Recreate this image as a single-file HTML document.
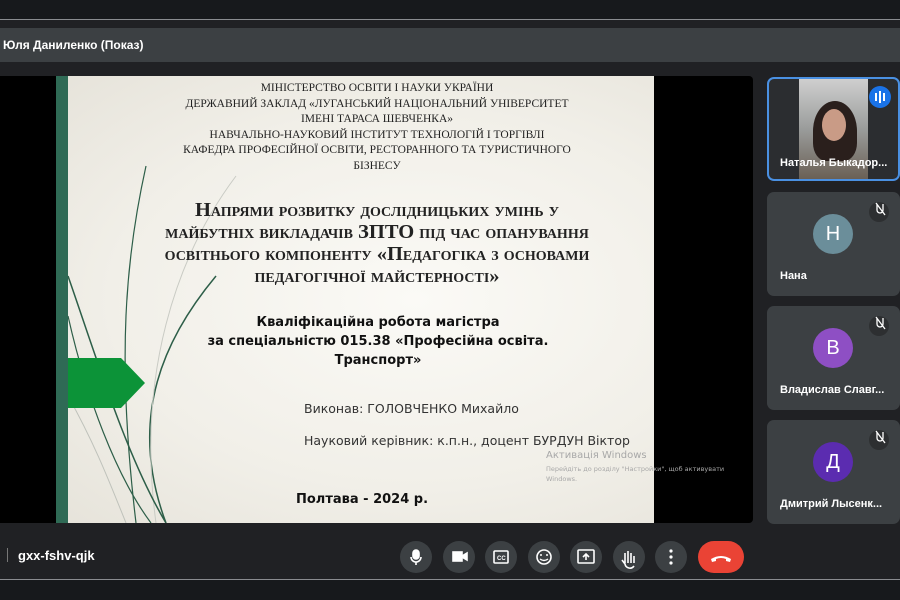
<!DOCTYPE html>
<html><head><meta charset="utf-8"><style>
*{margin:0;padding:0;box-sizing:border-box}
body{width:900px;height:600px;background:#202124;position:relative;overflow:hidden;font-family:"Liberation Sans",sans-serif}
.abs{position:absolute}
.top{left:0;top:0;width:900px;height:20px;background:#17191c;border-bottom:1px solid #8a8c90}
.hdr{left:0;top:28px;width:900px;height:34px;background:#3c4043;color:#fff;font-size:12px;font-weight:bold;line-height:34px;padding-left:3px}
.video{left:0;top:76px;width:753px;height:447px;background:#000;overflow:hidden;border-radius:0 4px 4px 0}
.slide{left:56px;top:0;width:598px;height:447px;background:radial-gradient(ellipse at 60% 50%,#fbfaf6 0%,#f1efe8 60%,#e6e3da 100%)}
.stripe{left:0;top:0;width:12px;height:447px;background:#2f6a55}
.serif{font-family:"Liberation Serif",serif;color:#222;text-align:center;white-space:nowrap}
.t1{left:22px;width:598px;top:5px;font-size:11.5px;line-height:15.6px}
.t2{left:22px;width:598px;top:123px;font-size:20.5px;line-height:22px;font-weight:bold;font-variant:small-caps}
.sans{font-family:"DejaVu Sans","Liberation Sans",sans-serif;color:#111;white-space:nowrap}
.k{left:122px;width:400px;top:237px;font-size:13px;line-height:19px;font-weight:bold;text-align:center}
.tile{left:767px;width:133px;height:104px;background:#3c4043;border-radius:7px}
.av{width:40px;height:40px;border-radius:50%;color:#fff;font-size:20px;text-align:center;line-height:40px;left:46px;top:22px}
.nm{left:13px;top:78px;color:#fff;font-size:11px;font-weight:bold;white-space:nowrap}
.mic{left:102px;top:10px;width:20px;height:20px;border-radius:50%;background:#2d2f31}
.btn{top:541px;width:32px;height:32px;border-radius:50%;background:#3c4043}
</style></head><body>
<div class="abs top"></div>
<div class="abs hdr">Юля Даниленко (Показ)</div>
<div class="abs video">
 <div class="abs slide">
  <svg class="abs" style="left:0;top:0" width="200" height="447" viewBox="0 0 200 447">
   <path d="M90 90 C70 180 60 280 80 447" stroke="#2d5e48" stroke-width="1.2" fill="none"/>
   <path d="M160 200 C110 260 70 340 110 447" stroke="#2d5e48" stroke-width="1.5" fill="none"/>
   <path d="M180 100 C120 180 80 300 100 447" stroke="#c9cbc4" stroke-width="1" fill="none"/>
   <path d="M12 200 C40 280 70 380 110 447" stroke="#2d5e48" stroke-width="1.5" fill="none"/>
   <path d="M12 240 C30 320 60 400 95 447" stroke="#2d5e48" stroke-width="1.2" fill="none"/>
   <path d="M12 320 C40 370 55 410 70 447" stroke="#bfc2bb" stroke-width="1" fill="none"/>
   <polygon points="0,282 65,282 89,307 65,332 0,332" fill="#0c9338"/>
  </svg>
  <div class="abs stripe"></div>
  <div class="abs serif t1">МІНІСТЕРСТВО ОСВІТИ І НАУКИ УКРАЇНИ<br>ДЕРЖАВНИЙ ЗАКЛАД «ЛУГАНСЬКИЙ НАЦІОНАЛЬНИЙ УНІВЕРСИТЕТ<br>ІМЕНІ ТАРАСА ШЕВЧЕНКА»<br>НАВЧАЛЬНО-НАУКОВИЙ ІНСТИТУТ ТЕХНОЛОГІЙ І ТОРГІВЛІ<br>КАФЕДРА ПРОФЕСІЙНОЇ ОСВІТИ, РЕСТОРАННОГО ТА ТУРИСТИЧНОГО<br>БІЗНЕСУ</div>
  <div class="abs serif t2">Напрями розвитку дослідницьких умінь у<br>майбутніх викладачів ЗПТО під час опанування<br>освітнього компоненту «Педагогіка з основами<br>педагогічної майстерності»</div>
  <div class="abs sans k">Кваліфікаційна робота магістра<br>за спеціальністю 015.38 «Професійна освіта.<br>Транспорт»</div>
  <div class="abs sans" style="left:248px;top:325px;font-size:12.5px;color:#333">Виконав: ГОЛОВЧЕНКО Михайло</div>
  <div class="abs sans" style="left:248px;top:357px;font-size:12.5px;color:#333">Науковий керівник: к.п.н., доцент БУРДУН Віктор</div>
  <div class="abs sans" style="left:490px;top:374px;font-size:10px;color:#a8a8a8">Активація Windows</div>
  <div class="abs sans" style="left:490px;top:388px;font-size:6.5px;color:#a8a8a8;line-height:10px;width:190px">Перейдіть до розділу "Настройки", щоб активувати<br>Windows.</div>
  <div class="abs sans" style="left:240px;top:416px;font-size:13px;font-weight:bold">Полтава - 2024 р.</div>
 </div>
</div>
<div class="abs tile" style="top:77px;background:#2b2d30;border:2px solid #4a90e2;height:104px">
 <div class="abs" style="left:30px;top:0;width:69px;height:100px;background:linear-gradient(180deg,#cfcfcf,#9a9c9b 50%,#6a6055)"></div>
 <div class="abs" style="left:44px;top:22px;width:44px;height:60px;border-radius:50% 50% 30% 30%;background:#2a1f1c"></div>
 <div class="abs" style="left:53px;top:30px;width:24px;height:32px;border-radius:50%;background:#c99b86"></div>
 <div class="abs" style="left:100px;top:7px;width:22px;height:22px;border-radius:50%;background:#1a73e8"></div>
 <div class="abs" style="left:106px;top:14px;width:2px;height:8px;background:#fff"></div><div class="abs" style="left:110px;top:12px;width:2px;height:12px;background:#fff"></div><div class="abs" style="left:114px;top:14px;width:2px;height:8px;background:#fff"></div>
 <div class="abs nm" style="left:11px;top:78px">Наталья Быкадор...</div>
</div>
<div class="abs tile" style="top:192px"><div class="abs mic"></div><div class="abs av" style="background:#6b8e9a">Н</div><div class="abs nm">Нана</div></div>
<div class="abs tile" style="top:306px"><div class="abs mic"></div><div class="abs av" style="background:#8e4fc4">В</div><div class="abs nm">Владислав Славг...</div></div>
<div class="abs tile" style="top:420px"><div class="abs mic"></div><div class="abs av" style="background:#5b2cb0">Д</div><div class="abs nm">Дмитрий Лысенк...</div></div>
<div class="abs" style="left:7px;top:548px;width:1px;height:14px;background:#777"></div>
<div class="abs" style="left:18px;top:548px;color:#fff;font-size:13px;font-weight:bold">gxx-fshv-qjk</div>
<div class="abs btn" style="left:400px"></div>
<div class="abs btn" style="left:443px"></div>
<div class="abs btn" style="left:485px"></div>
<div class="abs btn" style="left:528px"></div>
<div class="abs btn" style="left:570px"></div>
<div class="abs btn" style="left:613px"></div>
<div class="abs btn" style="left:655px"></div>
<div class="abs" style="left:698px;top:541px;width:46px;height:32px;border-radius:16px;background:#ea4335"></div>
<svg class="abs" style="left:0;top:0" width="900" height="600">
 <g fill="none" stroke="#fff" stroke-width="1.6">
  <rect x="413" y="550" width="6" height="9" rx="3" fill="#fff"/><path d="M411 557a5 5 0 0 0 10 0M416 562v3"/>
  <rect x="453" y="552" width="9" height="9" fill="#fff"/><path d="M462 556l5-3v7l-5-3z" fill="#fff"/>
  <rect x="494" y="551" width="14" height="12" rx="1"/>
  <circle cx="544" cy="557" r="7"/>
  <rect x="578" y="550" width="16" height="13" rx="1"/><path d="M586 560v-6m-3 3l3-3 3 3"/>
  <path d="M625 563v-10m3 10v-12m3 12v-10m3 10v-7m-12 4l3 4a5 5 0 0 0 9 2"/>
 </g>
 <text x="497" y="560" fill="#fff" font-size="6" font-family="Liberation Sans" font-weight="bold">CC</text>
 <circle cx="541" cy="555" r="1" fill="#fff"/><circle cx="547" cy="555" r="1" fill="#fff"/><path d="M540 559q4 3 8 0" stroke="#fff" stroke-width="1.4" fill="none"/>
 <circle cx="671" cy="551" r="1.6" fill="#fff"/><circle cx="671" cy="557" r="1.6" fill="#fff"/><circle cx="671" cy="563" r="1.6" fill="#fff"/>
 <path d="M711 559q10-6 20 0l-1 3-4-1v-2q-5-2-10 0v2l-4 1z" fill="#fff"/>
 <g stroke="#fff" stroke-width="1.3" fill="none"><path d="M877 204v6a3 3 0 0 0 6 0v-6M876 203l9 12"/><path d="M877 318v6a3 3 0 0 0 6 0v-6M876 317l9 12"/><path d="M877 432v6a3 3 0 0 0 6 0v-6M876 431l9 12"/></g>
</svg>
<div class="abs" style="left:0;top:579px;width:900px;height:1px;background:#8a8c90"></div>
<div class="abs" style="left:0;top:580px;width:900px;height:20px;background:#17191c"></div>
</body></html>
